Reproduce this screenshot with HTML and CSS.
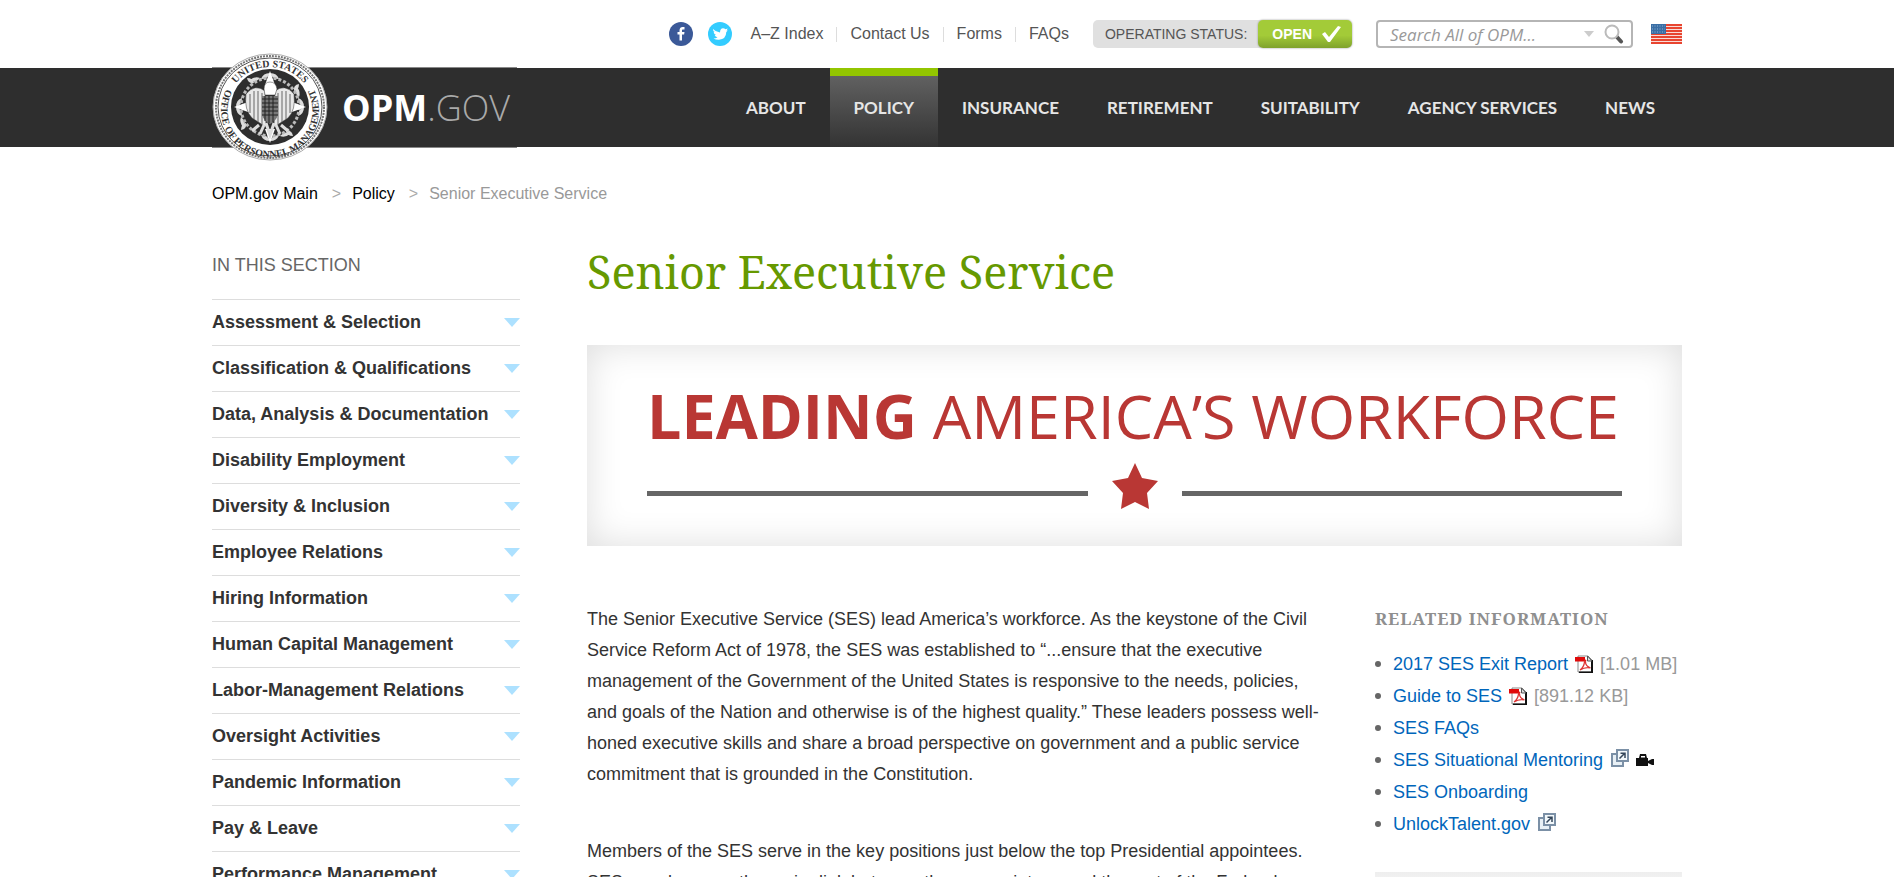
FILE: index.html
```html
<!DOCTYPE html>
<html lang="en">
<head>
    <meta charset="UTF-8">
    <meta name="viewport" content="width=device-width, initial-scale=1.0">
    <title>Senior Executive Service</title>
    <link rel="stylesheet" href="styles.css">
</head>
<body>
    <!-- shared icons -->
    <svg class="sprite" aria-hidden="true">
        <symbol id="pdf" viewBox="0 0 18 18">
            <path d="M3 1h10l4 4v12H3z" fill="#fff" stroke="#888"/>
            <path d="M17 5v12.500H4" fill="none" stroke="#111" stroke-width="2"/>
            <path d="M12.500 1v5H17z" fill="#ddd" stroke="#555"/>
            <path d="M0 2h10v2.500q2 0 1 2H0z" fill="#e00a0a"/>
            <path d="M5 15q4-3 4.500-8q.5-2 1 0q0 4 5 6q-5-1.500-10.500 2z" fill="none" stroke="#d33" stroke-width="1.300"/>
        </symbol>
        <symbol id="external" viewBox="0 0 18 18">
            <path d="M1 5h11v12H1z" fill="#e8f0f5" stroke="#7b90a6" stroke-width="2"/>
            <path d="M6 1h11v11H6z" fill="#f2f8fb" stroke="#7b90a6" stroke-width="2"/>
            <path d="M8.500 9.500l5-5M9.500 4.300h4.500V9" fill="none" stroke="#34465a" stroke-width="1.500"/>
        </symbol>
        <symbol id="camera" viewBox="0 0 18 12">
            <path d="M0 4h3l1-4h6l1 4h1v3l4-2h2v6h-2l-4-2v3H0z" fill="#111"/>
            <path d="M5 2h4v1.500H5z" fill="#fff"/>
        </symbol>
    </svg>

    <div class="topbar container">
        <a class="social" href="#" aria-label="Facebook">
            <svg width="24" height="24" viewBox="0 0 24 24">
                <circle cx="12" cy="12" r="12" fill="#3b5998"/>
                <path d="M10.500 18.500v-6H8.500V10h2V8.500C10.500 6 12 5 13.500 5h2v2.500H14c-.7 0-1 .4-1 1V10h2.500l-.4 2.500H13v6z" fill="#fff"/>
            </svg>
        </a>
        <a class="social" href="#" aria-label="Twitter">
            <svg width="24" height="24" viewBox="0 0 24 24">
                <circle cx="12" cy="12" r="12" fill="#3cf"/>
                <path d="M5 7q3 3.300 7 3.400Q12 6.500 15 6.300q1.500 0 2.500 1l2.200-.8-1.100 2 1.200.1-1.500 1.500q-.2 7.200-7.300 7.700Q8 18 5.500 16.400q2.500 0 4-1.200-2.200-.3-2.800-2.200h1.400Q5.700 12 5.500 9.600l1.300.4Q4.400 8.500 5 7z" fill="#fff"/>
            </svg>
        </a>
        <ul class="quick-links">
            <li><a href="#">A–Z Index</a></li>
            <li><a href="#">Contact Us</a></li>
            <li><a href="#">Forms</a></li>
            <li><a href="#">FAQs</a></li>
        </ul>
        <a class="status" href="#">
            <span class="status-label">OPERATING STATUS:</span>
            <span class="status-value">OPEN
                <svg width="20" height="16" viewBox="0 0 20 16"><path d="M1 8l3-2 4 5L17 0l3 1-11 15H7z" fill="#fff"/></svg>
            </span>
        </a>
        <form class="search">
            <input type="text" aria-label="Search All of OPM" placeholder="Search All of OPM...">
            <svg width="10" height="6" viewBox="0 0 10 6"><path d="M0 0h10L5 6z" fill="#ccc"/></svg>
            <button type="button" aria-label="Search">
                <svg width="20" height="20" viewBox="0 0 20 20">
                    <path d="M12.500 12.500l4.500 5" stroke="#555" stroke-width="4" stroke-linecap="round"/>
                    <circle cx="8" cy="8" r="6.500" fill="#fff" stroke="#bbb" stroke-width="2"/>
                </svg>
            </button>
        </form>
        <a class="flag" href="#" aria-label="USA.gov">
            <svg width="31" height="20" viewBox="0 0 31 20">
                <rect width="31" height="20" fill="#f9dcd7"/>
                <path d="M0 1h31M0 4h31M0 7h31M0 10h31M0 13h31M0 16h31M0 19h31" stroke="#e84530" stroke-width="1.800"/>
                <rect width="15" height="10" fill="#3a6ea5"/>
                <path d="M1 2h13M1 5h13M1 8h13" stroke="#8fb0d0" stroke-dasharray="1 1.500"/>
            </svg>
        </a>
    </div>

    <header class="header">
        <div class="container header-inner">
            <a class="logo" href="#">
                <svg class="seal" width="116" height="110" viewBox="0 0 116 110">
                    <defs>
                        <path id="seal-top" d="M16 54A42 40 0 0 1 100 54"/>
                        <path id="seal-bottom" d="M19 29A49 47 0 1 0 97 29"/>
                        <g id="leaf">
                            <path d="M58 20q-7 0-9 6q7 0 9-6zM58 20q7 0 9 6q-7 0-9-6z"/>
                            <path d="M48 25q-5-2-10 2q5 4 10-2zM42 30q-1-5-7-5q1 6 7 5z"/>
                        </g>
                    </defs>
                    <ellipse cx="58" cy="54" rx="57" ry="53" fill="#fff" stroke="#aaa"/>
                    <ellipse cx="58" cy="54" rx="54" ry="51" fill="none" stroke="#777" stroke-width="2" stroke-dasharray="2 1"/>
                    <ellipse cx="58" cy="54" rx="52" ry="49" fill="#fff" stroke="#555"/>
                    <text class="seal-text"><textPath href="#seal-top" startOffset="50%" text-anchor="middle">UNITED STATES</textPath></text>
                    <text class="seal-text"><textPath href="#seal-bottom" startOffset="50%" text-anchor="middle">OFFICE OF PERSONNEL MANAGEMENT</textPath></text>
                    <ellipse cx="58" cy="54" rx="39" ry="38" fill="#2e2e2e"/>
                    <g fill="#ddd">
                        <use href="#leaf"/>
                        <use href="#leaf" transform="rotate(90 58 54)"/>
                        <use href="#leaf" transform="rotate(180 58 54)"/>
                        <use href="#leaf" transform="rotate(270 58 54)"/>
                        <circle cx="58" cy="54" r="29" fill="none" stroke="#bbb" stroke-width="3" stroke-dasharray="3 2"/>
                        <path d="M58 18l5 14h-10zM58 90l5-14h-10zM22 54l14-5v10zM94 54l-14-5v10z" fill="#fff"/>
                    </g>
                    <!-- eagle -->
                    <g fill="#e8e8e8" stroke="#333" stroke-width=".5">
                        <path d="M53 38Q43 30 34 41q-2 16 6 24l14 9z"/>
                        <path d="M63 38q10-8 19 3q2 16-6 24l-14 9z"/>
                        <path d="M52 36q0-7 6-7t7 7l-2 6H53z" fill="#fff"/>
                    </g>
                    <path d="M38 41v19M42 38v28M46 38v31M50 40v31M66 40v31M70 38v31M74 38v28M78 41v19" stroke="#666"/>
                    <path d="M50 43h16v19q-2 6-8 9q-6-3-8-9z" fill="#777"/>
                    <path d="M50 46h16M50 50h16M50 54h16M50 58h16M50 62h16M53 43v25M57 43v27M61 43v26" stroke="#222"/>
                    <path d="M47 72l-7 6M52 72l-4 9M64 72l4 9M69 72l7 6M54 70l4 12 4-12" stroke="#ddd" stroke-width="3" fill="none"/>
                </svg>
                <span class="wordmark"><b>OPM</b><span>.GOV</span></span>
            </a>
            <nav class="main-nav">
                <a href="#">ABOUT</a>
                <a class="active" href="#">POLICY</a>
                <a href="#">INSURANCE</a>
                <a href="#">RETIREMENT</a>
                <a href="#">SUITABILITY</a>
                <a href="#">AGENCY SERVICES</a>
                <a href="#">NEWS</a>
            </nav>
        </div>
    </header>

    <div class="container">
        <div class="breadcrumb">
            <a href="#">OPM.gov Main</a>
            <span class="sep">&gt;</span>
            <a href="#">Policy</a>
            <span class="sep">&gt;</span>
            <span>Senior Executive Service</span>
        </div>

        <div class="page">
            <nav class="sidebar">
                <h2>IN THIS SECTION</h2>
                <ul>
                    <li><a href="#">Assessment &amp; Selection</a></li>
                    <li><a href="#">Classification &amp; Qualifications</a></li>
                    <li><a href="#">Data, Analysis &amp; Documentation</a></li>
                    <li><a href="#">Disability Employment</a></li>
                    <li><a href="#">Diversity &amp; Inclusion</a></li>
                    <li><a href="#">Employee Relations</a></li>
                    <li><a href="#">Hiring Information</a></li>
                    <li><a href="#">Human Capital Management</a></li>
                    <li><a href="#">Labor-Management Relations</a></li>
                    <li><a href="#">Oversight Activities</a></li>
                    <li><a href="#">Pandemic Information</a></li>
                    <li><a href="#">Pay &amp; Leave</a></li>
                    <li><a href="#">Performance Management</a></li>
                </ul>
            </nav>

            <main>
                <h1>Senior Executive Service</h1>
                <div class="banner">
                    <div class="banner-title"><b>LEADING</b> <span>AMERICA’S WORKFORCE</span></div>
                    <div class="banner-rule">
                        <svg width="46" height="46" viewBox="0 0 46 46"><path d="M23 0l7 15 16 3-11 12 2 16-14-7-14 7 2-16L0 18l16-3z" fill="#b93734"/></svg>
                    </div>
                </div>
                <div class="columns">
                    <div class="text">
                        <p>The Senior Executive Service (SES) lead America’s workforce. As the keystone of the Civil Service Reform Act of 1978, the SES was established to “...ensure that the executive management of the Government of the United States is responsive to the needs, policies, and goals of the Nation and otherwise is of the highest quality.” These leaders possess well-honed executive skills and share a broad perspective on government and a public service commitment that is grounded in the Constitution.</p>
                        <p>Members of the SES serve in the key positions just below the top Presidential appointees. SES members are the major link between these appointees and the rest of the Federal</p>
                    </div>
                    <aside class="related">
                        <h3>RELATED INFORMATION</h3>
                        <ul>
                            <li><a href="#">2017 SES Exit Report</a> <svg width="18" height="18"><use href="#pdf"/></svg> <span>[1.01 MB]</span></li>
                            <li><a href="#">Guide to SES</a> <svg width="18" height="18"><use href="#pdf"/></svg> <span>[891.12 KB]</span></li>
                            <li><a href="#">SES FAQs</a></li>
                            <li class="media"><a href="#">SES Situational Mentoring</a> <svg width="18" height="18"><use href="#external"/></svg> <svg width="18" height="12"><use href="#camera"/></svg></li>
                            <li><a href="#">SES Onboarding</a></li>
                            <li class="media"><a href="#">UnlockTalent.gov</a> <svg width="18" height="18"><use href="#external"/></svg></li>
                        </ul>
                        <div class="divider"></div>
                    </aside>
                </div>
            </main>
        </div>
    </div>
</body>
</html>
```
FILE: styles.css
```css
* {
    box-sizing: border-box;
}
body {
    margin: 0;
    background-color: #fff;
    color: #333;
    font-family: "Liberation Sans", Arial, sans-serif;
    font-size: 18px;
    overflow-x: hidden;
}
a {
    color: inherit;
    text-decoration: none;
}
ul {
    list-style: none;
    margin: 0;
    padding: 0;
}
.sprite {
    display: none;
}
.container {
    max-width: 1518px;
    margin: 0 auto;
    padding: 0 24px;
}

/* top bar */
.topbar {
    display: flex;
    justify-content: flex-end;
    align-items: center;
    height: 68px;
}
.social {
    display: flex;
    margin-right: 15px;
}
.quick-links {
    display: flex;
    margin-left: 4px;
    font-size: 16px;
    color: #555;
}
.quick-links li + li {
    margin-left: 13px;
    padding-left: 14px;
    background: linear-gradient(#ddd, #ddd) no-repeat left center / 1px 15px;
}
.status {
    display: flex;
    height: 28px;
    margin-left: 24px;
    font-size: 14px;
    line-height: 28px;
    background-color: #e0e0e0;
    border-radius: 5px;
}
.status-label {
    padding: 0 11px 0 12px;
    color: #555;
}
.status-value {
    display: flex;
    align-items: center;
    gap: 9px;
    padding: 0 11px 0 14px;
    color: #fff;
    font-weight: bold;
    background: linear-gradient(#a3cb38 55%, #7fa22c);
    border-radius: 5px;
    box-shadow: 0 0 2px #888;
}
.search {
    display: flex;
    align-items: center;
    width: 257px;
    height: 28px;
    margin: 0 18px 0 24px;
    padding: 0 7px 0 12px;
    border: 2px solid #b5b5b5;
    border-radius: 4px;
}
.search input {
    flex: 1;
    min-width: 0;
    padding: 0;
    border: 0;
    outline: 0;
    font: italic 17px "Open Sans", sans-serif;
}
.search input::placeholder {
    color: #999;
}
.search button {
    display: flex;
    margin-left: 10px;
    padding: 0;
    border: 0;
    background: none;
}
.flag {
    display: flex;
}

/* header */
.header {
    height: 79px;
    background-color: #2e2e2e;
}
.header-inner {
    display: flex;
    justify-content: space-between;
    align-items: center;
    height: 79px;
}
.logo {
    display: flex;
    align-items: center;
    width: 305px;
    height: 81px;
    border-top: 1px solid #888;
    border-bottom: 1px solid #888;
}
.seal {
    flex: none;
    margin-right: 14px;
}
.seal-text {
    font: bold 10px "Liberation Serif", serif;
    fill: #333;
}
.wordmark {
    color: #fff;
    font-family: "Open Sans", sans-serif;
    font-size: 36px;
    line-height: 48px;
}
.wordmark span {
    color: #aaa;
    font-weight: 300;
}
.main-nav {
    display: flex;
    height: 79px;
    padding-right: 3px;
}
.main-nav a {
    padding: 0 24px;
    color: #e6e6e6;
    font-family: Lato, sans-serif;
    font-size: 17px;
    font-weight: bold;
    line-height: 79px;
    white-space: nowrap;
}
.main-nav .active {
    background: linear-gradient(#666, #333);
    box-shadow: inset 0 8px #93c500;
}

/* breadcrumb */
.breadcrumb {
    display: flex;
    padding: 37px 0 0;
    color: #999;
    font-size: 16px;
    line-height: 20px;
}
.breadcrumb a {
    color: #000;
}
.breadcrumb .sep {
    padding: 0 11px 0 14px;
    color: #aaa;
}

/* page */
.page {
    display: grid;
    grid-template-columns: 308px minmax(0, 1fr);
    gap: 67px;
    margin-top: 38px;
}
.sidebar h2 {
    margin: 12px 0 23px;
    color: #666;
    font-size: 18px;
    font-weight: normal;
    line-height: 22px;
}
.sidebar li a {
    display: flex;
    justify-content: space-between;
    align-items: center;
    height: 46px;
    border-top: 1px solid #ddd;
    font-weight: bold;
}
.sidebar li a::after {
    content: "";
    border: 8px solid transparent;
    border-top: 9px solid #ade1ff;
    border-bottom: 0;
}
h1 {
    margin: 0 0 43px;
    color: #690;
    font-family: "Noto Serif", "Droid Serif", "Liberation Serif", serif;
    font-size: 45px;
    font-weight: normal;
    line-height: 60px;
}
.banner {
    height: 201px;
    padding: 28px 60px 0;
    overflow: hidden;
    box-shadow: inset 0 0 36px #ddd;
}
.banner-title {
    color: #b93734;
    font-family: "Open Sans", sans-serif;
    font-size: 61px;
    line-height: 86px;
    white-space: nowrap;
}
.banner-rule {
    display: flex;
    align-items: center;
    gap: 24px;
    margin-top: 4px;
}
.banner-rule::before,
.banner-rule::after {
    content: "";
    flex: 1;
    height: 5px;
    margin-top: 14px;
    background-color: #666;
}
.columns {
    display: grid;
    grid-template-columns: 1fr 307px;
    gap: 56px;
    margin-top: 58px;
}
.text p {
    margin: 0 0 46px;
    line-height: 31px;
}
.related h3 {
    margin: 0 0 14px;
    color: #8f8f8f;
    font-family: "Noto Serif", "Droid Serif", "Liberation Serif", serif;
    font-size: 17px;
    letter-spacing: 1px;
    line-height: 30px;
}
.related li {
    display: flex;
    align-items: center;
    gap: 7px;
    height: 32px;
    color: #999;
}
.related li::before {
    content: "";
    width: 6px;
    height: 6px;
    margin-right: 5px;
    border-radius: 50%;
    background-color: #666;
}
.related li a {
    color: #06b;
}
.related .media svg {
    margin: 0 0 4px 1px;
}
.related .media svg + svg {
    margin: 0;
}
.divider {
    height: 30px;
    margin-top: 32px;
    background: linear-gradient(#eee, #fff);
}
```
